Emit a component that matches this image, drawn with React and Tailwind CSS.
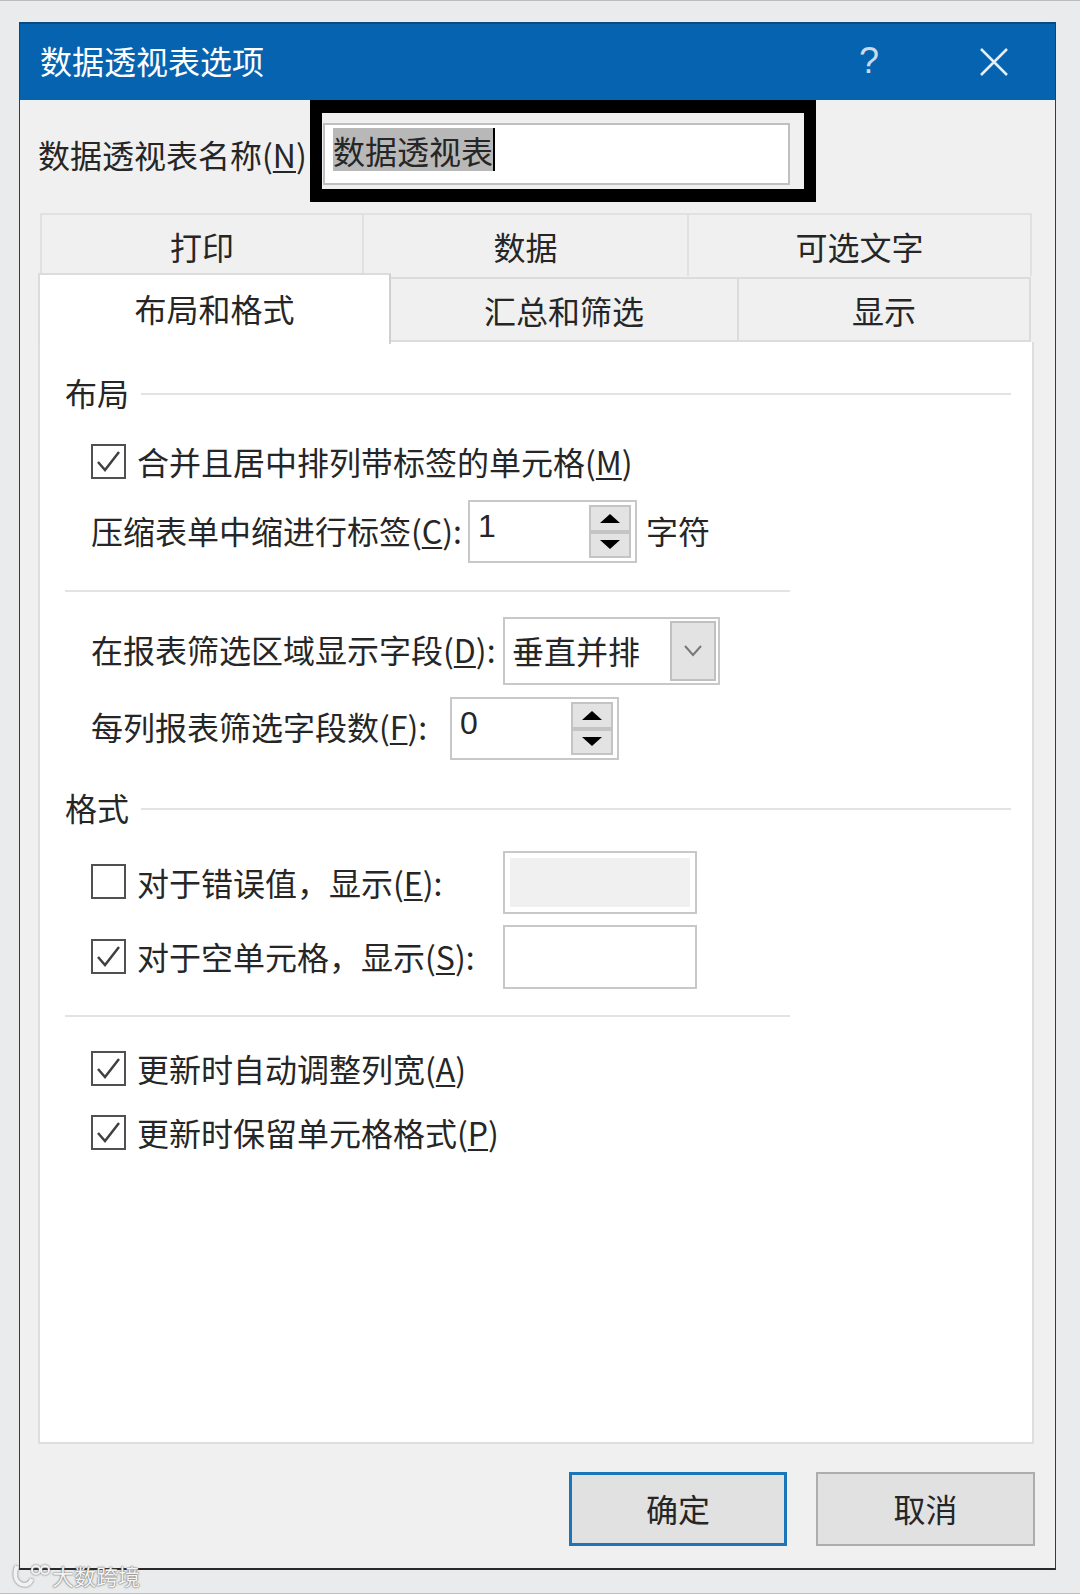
import React from 'react';

const Check = ({ checked }) => (
  <div className="w-[35px] h-[35px] shrink-0 border-2 border-[#505050] bg-white flex items-center justify-center">
    {checked && (
      <svg width="27" height="27" viewBox="0 0 27 27" fill="none" stroke="#404040" strokeWidth="2.5">
        <path d="M3 14l7 8L24 4" />
      </svg>
    )}
  </div>
);

const CheckRow = ({ checked, children }) => (
  <div className="h-[36px] flex items-center gap-[11px]">
    <Check checked={checked} />
    <span className="whitespace-nowrap">{children}</span>
  </div>
);

const Arrow = ({ up }) => (
  <div className="flex-1 bg-[#e3e3e3] border-2 border-[#c4c4c4] flex items-center justify-center">
    <div className={up
      ? 'w-0 h-0 border-x-[10px] border-x-transparent border-b-[9px] border-b-black'
      : 'w-0 h-0 border-x-[10px] border-x-transparent border-t-[9px] border-t-black'} />
  </div>
);

const Spinner = ({ value }) => (
  <div className="w-[169px] h-[63px] border-2 border-[#c8c8c8] bg-white flex justify-between pl-[8px] pr-[4px] py-[3px]">
    <span className="mt-[5px] font-['Liberation_Sans','Noto_Sans_CJK_SC',sans-serif]">{value}</span>
    <div className="w-[42px] flex flex-col">
      <Arrow up />
      <Arrow />
    </div>
  </div>
);

const U = ({ children }) => <span className="underline underline-offset-[3px] decoration-2">{children}</span>;

const SectionHead = ({ title, className }) => (
  <div className={`h-[38px] flex items-center gap-[12px] ${className}`}>
    <span className="whitespace-nowrap">{title}</span>
    <div className="flex-1 h-[2px] mt-[3px] bg-[#e3e3e3]" />
  </div>
);

const Tab = ({ className, children }) => (
  <div className={`flex items-center justify-center border-t-2 border-l-2 border-[#e1e1e1] ${className}`}>
    {children}
  </div>
);

const App = () => {
  return (
    <div className="relative w-[1080px] h-[1594px] bg-[#e9ebed] border-y border-y-[#bdbdbd] pt-[21px] pl-[19px] text-[32px] leading-none text-[#262626] font-['Noto_Sans_CJK_SC',sans-serif] overflow-hidden">
      {/* Dialog window */}
      <div className="w-[1037px] h-[1548px] bg-[#f0f0f0] border-x border-b-2 border-x-[#3a3a3a] border-b-[#2a2a2a] flex flex-col">
        {/* Title bar */}
        <div className="h-[78px] shrink-0 bg-[#0563b0] border-t-2 border-t-[#0b4a80] flex items-center justify-between pl-[20px] pr-[47px] text-white">
          <span className="mb-[4px]">数据透视表选项</span>
          <div className="flex items-center gap-[101px]">
            <span className="font-['Liberation_Sans',sans-serif] text-[36px] font-light text-[#c9dbeb] mb-[2px]">?</span>
            <svg width="28" height="28" viewBox="0 0 28 28" stroke="#e6eef6" strokeWidth="2.5" fill="none">
              <path d="M1 1l26 26M27 1L1 27" />
            </svg>
          </div>
        </div>

        {/* Name row */}
        <div className="h-[102px] shrink-0 flex pl-[18px]">
          <span className="w-[272px] whitespace-nowrap mt-[38px]">数据透视表名称(<U>N</U>)</span>
          <div className="w-[506px] h-[102px] bg-[#f0f0f0] border-x-[12px] border-t-[13px] border-b-[13px] border-black pl-[1px] pt-[10px]">
            <div className="w-[467px] h-[62px] bg-white border-2 border-[#c0c0c0] flex items-start pl-[8px] pt-[3px]">
              <span className="h-[43px] bg-[#b8b8b8] border-r-2 border-black flex items-center">数据透视表</span>
            </div>
          </div>
        </div>

        {/* Tabs, top row */}
        <div className="h-[63px] mt-[11px] shrink-0 ml-[20px] w-[992px] flex">
          <Tab className="w-[322px] border-l-0">打印</Tab>
          <Tab className="w-[325px]">数据</Tab>
          <Tab className="w-[345px] border-r-2">可选文字</Tab>
        </div>

        {/* Tabs, bottom row */}
        <div className="h-[69px] -mt-[3px] shrink-0 ml-[18px] w-[993px] flex relative z-10">
          <div className="w-[353px] bg-white border-t-2 border-x-2 border-t-[#dcdcdc] border-x-[#dcdcdc] border-r-[#d0d0d0] flex items-center justify-center pb-[3px] -mb-[2px]">布局和格式</div>
          <div className="w-[346px] mt-[4px] border-t-2 border-b-2 border-[#dcdcdc] flex items-center justify-center">汇总和筛选</div>
          <div className="flex-1 mt-[4px] border-t-2 border-b-2 border-x-2 border-[#dcdcdc] flex items-center justify-center">显示</div>
        </div>

        {/* Panel */}
        <div className="h-[1102px] shrink-0 ml-[18px] w-[996px] bg-white border-x-2 border-b-2 border-[#dedede] pl-[25px] pr-[21px] pt-[31px]">
          <SectionHead title="布局" />

          <div className="mt-[32px] pl-[26px]">
            <CheckRow checked>合并且居中排列带标签的单元格(<U>M</U>)</CheckRow>
          </div>

          <div className="mt-[21px] pl-[26px] flex items-center">
            <span className="w-[377px] whitespace-nowrap mb-[4px]">压缩表单中缩进行标签(<U>C</U>):</span>
            <Spinner value="1" />
            <span className="ml-[9px] mb-[4px]">字符</span>
          </div>

          <div className="mt-[27px] h-[2px] w-[725px] bg-[#e3e3e3]" />

          <div className="mt-[25px] pl-[26px] flex items-center">
            <span className="w-[412px] whitespace-nowrap mb-[4px]">在报表筛选区域显示字段(<U>D</U>):</span>
            <div className="w-[217px] h-[68px] border-2 border-[#c8c8c8] bg-white flex items-center justify-between pl-[7px] pr-[2px] py-[2px]">
              <span className="mb-[2px]">垂直并排</span>
              <div className="w-[46px] h-full bg-[#e3e3e3] border-2 border-[#c0c0c0] flex items-center justify-center">
                <svg width="20" height="12" viewBox="0 0 20 12" fill="none" stroke="#777777" strokeWidth="2">
                  <path d="M2 1l8 9 8-9" />
                </svg>
              </div>
            </div>
          </div>

          <div className="mt-[12px] pl-[26px] flex items-center">
            <span className="w-[359px] whitespace-nowrap mb-[6px]">每列报表筛选字段数(<U>F</U>):</span>
            <Spinner value="0" />
          </div>

          <SectionHead title="格式" className="mt-[28px]" />

          <div className="mt-[25px] pl-[26px] flex items-center">
            <div className="w-[412px] mb-[2px]">
              <CheckRow>对于错误值，显示(<U>E</U>):</CheckRow>
            </div>
            <div className="w-[194px] h-[63px] border-2 border-[#c8c8c8] bg-white p-[5px]">
              <div className="w-full h-full bg-[#f0f0f0]" />
            </div>
          </div>

          <div className="mt-[11px] pl-[26px] flex items-center">
            <div className="w-[412px] mb-[2px]">
              <CheckRow checked>对于空单元格，显示(<U>S</U>):</CheckRow>
            </div>
            <div className="w-[194px] h-[64px] border-2 border-[#c8c8c8] bg-white" />
          </div>

          <div className="mt-[26px] h-[2px] w-[725px] bg-[#e3e3e3]" />

          <div className="mt-[33px] pl-[26px]">
            <CheckRow checked>更新时自动调整列宽(<U>A</U>)</CheckRow>
          </div>
          <div className="mt-[28px] pl-[26px]">
            <CheckRow checked>更新时保留单元格格式(<U>P</U>)</CheckRow>
          </div>
        </div>

        {/* Footer buttons */}
        <div className="mt-[28px] flex justify-end gap-[29px] pr-[20px]">
          <button className="w-[218px] h-[74px] bg-[#e1e1e1] border-[3px] border-[#1c75b8] pb-[3px]">确定</button>
          <button className="w-[219px] h-[74px] bg-[#e1e1e1] border-2 border-[#adadad] pb-[3px]">取消</button>
        </div>
      </div>

      {/* Watermark */}
      <div className="absolute left-[11px] top-[1561px] flex items-center gap-[1px] text-[#f4f4f4] text-[22px] [text-shadow:0_0_2px_#666,0_0_1px_#666]">
        <svg width="40" height="26" viewBox="0 0 40 26" fill="none" stroke="#f2f2f2" strokeWidth="4" style={{ filter: 'drop-shadow(0 0 1px #666)' }}>
          <path d="M6 4c-3 8-2 15 4 18 5 2 9 0 11-5" />
          <circle cx="25" cy="8" r="4" strokeWidth="2" />
          <circle cx="34" cy="8" r="4" strokeWidth="2" />
        </svg>
        <span>大数跨境</span>
      </div>
    </div>
  );
};

export default App;
